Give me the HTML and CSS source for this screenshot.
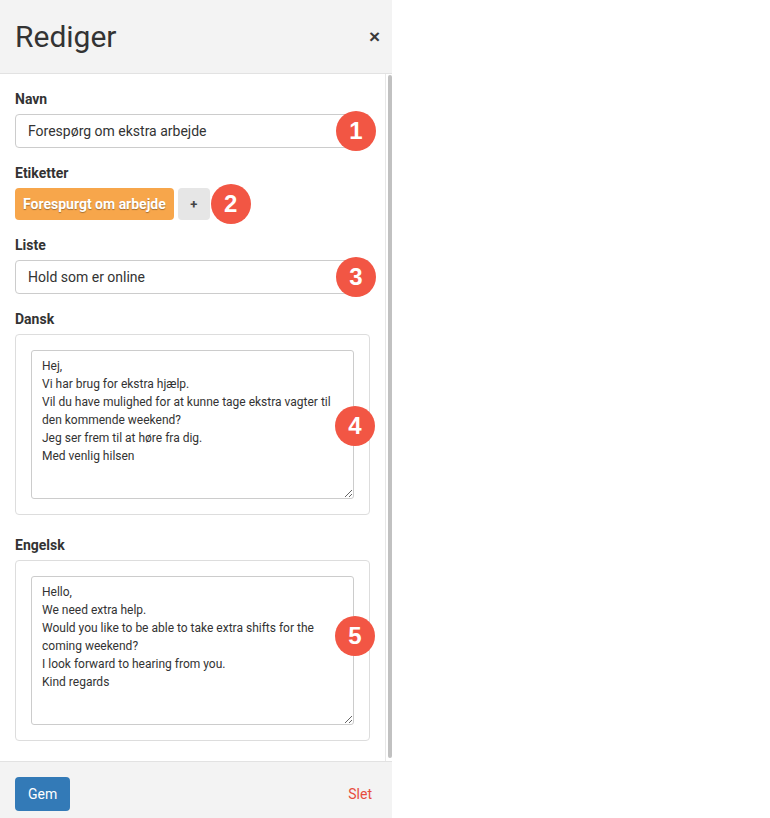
FILE: index.html
```html
<!DOCTYPE html>
<html lang="da">
<head>
<meta charset="utf-8">
<title>Rediger</title>
<link rel="stylesheet" href="styles.css">
</head>
<body>
<div class="panel">
  <header class="panel-head">
    <h1 class="panel-title">Rediger</h1>
    <button class="close" type="button">×</button>
  </header>
  <div class="panel-scroll">
    <div class="panel-body">
      <div class="field">
        <label class="field-label">Navn</label>
        <div class="field-control">
          <input class="text-input" type="text" value="Forespørg om ekstra arbejde">
          <span class="step">1</span>
        </div>
      </div>
      <div class="field">
        <label class="field-label">Etiketter</label>
        <div class="tags">
          <span class="tag">Forespurgt om arbejde</span>
          <button class="tag-add" type="button">+</button>
          <span class="step step-inline">2</span>
        </div>
      </div>
      <div class="field">
        <label class="field-label">Liste</label>
        <div class="field-control">
          <input class="text-input" type="text" value="Hold som er online">
          <span class="step">3</span>
        </div>
      </div>
      <div class="field field-box">
        <label class="field-label">Dansk</label>
        <div class="text-box">
          <textarea class="text-area">Hej,
Vi har brug for ekstra hjælp.
Vil du have mulighed for at kunne tage ekstra vagter til den kommende weekend?
Jeg ser frem til at høre fra dig.
Med venlig hilsen</textarea>
          <span class="step step-da">4</span>
        </div>
      </div>
      <div class="field field-box">
        <label class="field-label">Engelsk</label>
        <div class="text-box">
          <textarea class="text-area">Hello,
We need extra help.
Would you like to be able to take extra shifts for the coming weekend?
I look forward to hearing from you.
Kind regards</textarea>
          <span class="step step-en">5</span>
        </div>
      </div>
    </div>
    <div class="scrollbar"><div class="scrollbar-thumb"></div></div>
  </div>
  <footer class="panel-foot">
    <button class="btn-save" type="button">Gem</button>
    <a class="btn-delete" href="#">Slet</a>
  </footer>
</div>
</body>
</html>
```

FILE: styles.css
```css
* { box-sizing: border-box; }

html, body {
  margin: 0;
  padding: 0;
  background: #ffffff;
}

body {
  font-family: Roboto, "Liberation Sans", Arial, sans-serif;
  color: #333333;
  font-size: 14px;
}

.panel {
  width: 392px;
  height: 818px;
  display: flex;
  flex-direction: column;
  background: #ffffff;
}

.panel-head {
  height: 74px;
  flex: none;
  display: flex;
  align-items: center;
  justify-content: space-between;
  padding: 0 12px 0 15px;
  background: #f3f3f3;
  border-bottom: 1px solid #e2e2e2;
}

.panel-title {
  margin: 0;
  font-size: 30px;
  font-weight: 400;
  color: #333333;
  line-height: 36px;
}

.close {
  border: 0;
  background: transparent;
  padding: 0;
  font-family: "Liberation Sans", Arial, sans-serif;
  font-size: 19px;
  font-weight: bold;
  color: #3a3a3a;
  line-height: 20px;
  cursor: pointer;
}

.panel-scroll {
  flex: 1;
  display: flex;
  min-height: 0;
}

.panel-body {
  flex: 1;
  padding: 15px 15px 0 15px;
}

.scrollbar {
  width: 7px;
  flex: none;
  border-left: 1px solid #e8e8e8;
  padding: 1px 0 3px 2px;
  display: flex;
}

.scrollbar-thumb {
  width: 4px;
  background: #c1c1c1;
  border-radius: 2px;
}

.field {
  margin-bottom: 15px;
}

.field-box {
  margin-bottom: 20px;
}

.field-label {
  display: block;
  font-weight: bold;
  font-size: 14px;
  line-height: 20px;
  margin-bottom: 5px;
}

.field-control {
  position: relative;
}

.text-input {
  display: block;
  width: 100%;
  height: 34px;
  padding: 0 12px;
  border: 1px solid #cccccc;
  border-radius: 4px;
  font-family: Roboto, "Liberation Sans", Arial, sans-serif;
  font-size: 14px;
  color: #333333;
  background: #ffffff;
}

.tags {
  display: flex;
  align-items: center;
  gap: 4px;
  height: 32px;
}

.tag {
  height: 32px;
  display: flex;
  align-items: center;
  padding: 0 8px;
  background: #f7a64b;
  border-radius: 4px;
  color: #ffffff;
  font-weight: bold;
  font-size: 14px;
  text-shadow: 0 1px 1px rgba(0, 0, 0, 0.35);
}

.tag-add {
  width: 32px;
  height: 32px;
  border: 0;
  border-radius: 4px;
  background: #e6e6e6;
  color: #444444;
  font-family: Roboto, "Liberation Sans", Arial, sans-serif;
  font-weight: bold;
  font-size: 13px;
  padding: 0;
}

.text-box {
  position: relative;
  border: 1px solid #dddddd;
  border-radius: 4px;
  padding: 15px;
}

.text-area {
  display: block;
  width: 100%;
  height: 149px;
  padding: 6px 10px;
  border: 1px solid #cccccc;
  border-radius: 3px;
  font-family: Roboto, "Liberation Sans", Arial, sans-serif;
  font-size: 12px;
  line-height: 18px;
  color: #333333;
  resize: vertical;
  overflow: hidden;
}

.step {
  position: absolute;
  right: -6px;
  top: 50%;
  width: 40px;
  height: 40px;
  margin-top: -20px;
  border-radius: 50%;
  background: #f25644;
  color: #ffffff;
  font-family: "Liberation Sans", Arial, sans-serif;
  font-size: 24px;
  font-weight: bold;
  line-height: 40px;
  text-align: center;
}

.step-inline {
  position: static;
  margin: 0 0 0 -3px;
  flex: none;
}

.step-da {
  top: 71px;
  margin-top: 0;
}

.step-en {
  top: 55px;
  margin-top: 0;
}

.panel-foot {
  height: 57px;
  flex: none;
  display: flex;
  align-items: flex-start;
  justify-content: space-between;
  padding: 15px 20px 0 15px;
  background: #f3f3f3;
  border-top: 1px solid #e2e2e2;
}

.btn-save {
  height: 34px;
  padding: 0 13px;
  border: 0;
  border-radius: 4px;
  background: #337ab7;
  color: #ffffff;
  font-family: Roboto, "Liberation Sans", Arial, sans-serif;
  font-size: 14px;
}

.btn-delete {
  color: #e74c3c;
  text-decoration: none;
  font-size: 14px;
  line-height: 34px;
}
```
